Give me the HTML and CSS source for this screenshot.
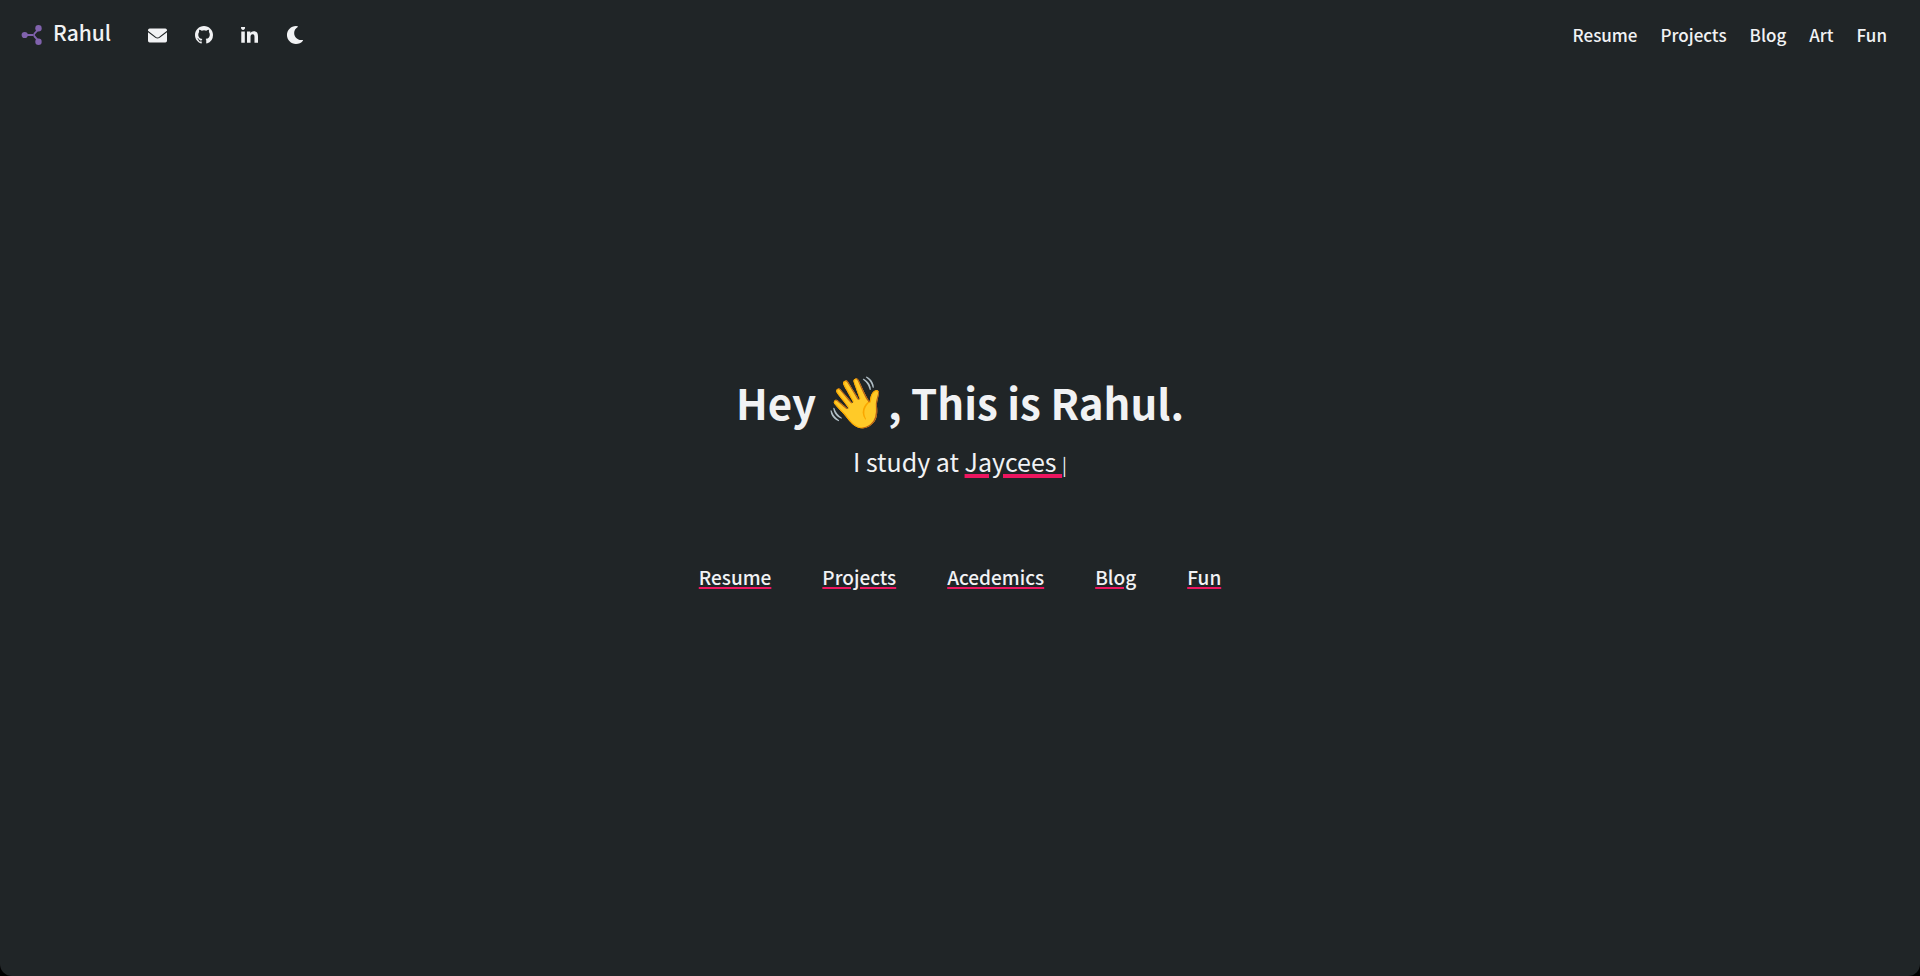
FILE: index.html
```html
<!DOCTYPE html>
<html lang="en">
<head>
<meta charset="utf-8">
<title>Rahul</title>
<link rel="stylesheet" href="styles.css">
</head>
<body>
<div class="page">
  <header class="topbar">
    <a class="brand" href="#">
      <svg class="brand-mark" viewBox="0 0 22 22" aria-hidden="true">
        <path d="M4 11H12M17.500 4.500C16.500 7 15 8 13.500 9.500Q12.200 11 13.500 12.500C15 14 16.500 15 17.500 18" fill="none" stroke="currentColor" stroke-width="1.800"/>
        <circle cx="3.700" cy="11" r="3.100"/><circle cx="17.500" cy="4.300" r="3.200"/><circle cx="17.500" cy="17.800" r="3.200"/>
      </svg>
      <span>Rahul</span>
    </a>
    <nav class="social" aria-label="Contact">
      <a href="#" aria-label="Email"><svg class="icon icon-mail" viewBox="0 0 19 19" aria-hidden="true"><path d="M1.700 2.500h15.600A1.700 1.700 0 0 1 19 4.200v.6L11 10.900q-1.500 1-3 0L0 4.800v-.6a1.700 1.700 0 0 1 1.700-1.700zM0 6.200l7.300 5.600q2.200 1.500 4.400 0L19 6.200v8.600a1.700 1.700 0 0 1-1.700 1.700H1.700A1.700 1.700 0 0 1 0 14.800z"/></svg></a>
      <a href="#" aria-label="GitHub"><svg class="icon" viewBox="0 0 16 16" aria-hidden="true"><path d="M8 0C3.580 0 0 3.580 0 8c0 3.540 2.290 6.530 5.470 7.590.4.070.55-.17.55-.38 0-.19-.01-.82-.01-1.490-2.010.37-2.530-.49-2.690-.94-.09-.23-.48-.94-.82-1.130-.28-.15-.68-.52-.01-.53.63-.01 1.080.58 1.230.82.72 1.210 1.870.87 2.330.66.070-.52.28-.87.51-1.070-1.780-.2-3.640-.89-3.640-3.950 0-.87.31-1.590.82-2.150-.08-.2-.36-1.020.08-2.120 0 0 .67-.21 2.200.82a7.600 7.600 0 0 1 4 0c1.530-1.040 2.200-.82 2.200-.82.44 1.100.16 1.920.08 2.120.51.56.82 1.270.82 2.150 0 3.070-1.870 3.750-3.650 3.950.29.25.54.73.54 1.480 0 1.070-.01 1.930-.01 2.200 0 .21.15.46.55.38A8.010 8.010 0 0 0 16 8c0-4.420-3.580-8-8-8z"/></svg></a>
      <a href="#" aria-label="LinkedIn"><svg class="icon icon-in" viewBox="0 0 448 448" aria-hidden="true"><path d="M100.300 416H7.400V116.900h92.900zM53.800 76.100C24.100 76.100 0 51.500 0 21.800a53.800 53.800 0 0 1 107.600 0c0 29.700-24.100 54.300-53.800 54.300zM447.900 416h-92.700V270.400c0-34.700-.7-79.200-48.300-79.200-48.300 0-55.700 37.700-55.700 76.700V416h-92.800V116.900h89.100v40.800h1.300c12.400-23.500 42.700-48.300 87.900-48.300 94 0 111.300 61.900 111.300 142.300V416z"/></svg></a>
      <button class="theme" type="button" aria-label="Dark mode"><svg class="icon" viewBox="0 0 512 512" aria-hidden="true"><path d="M283.200 512c79 0 151.100-35.900 198.900-94.800 7.100-8.700-.6-21.400-11.600-19.400-124.200 23.700-238.300-71.600-238.300-197 0-72.200 38.700-138.600 101.500-174.400 9.700-5.500 7.300-20.200-3.800-22.200A258 258 0 0 0 283.200 0c-141.300 0-256 114.500-256 256 0 141.300 114.500 256 256 256z"/></svg></button>
    </nav>
    <nav class="menu" aria-label="Main">
      <a href="#">Resume</a><a href="#">Projects</a><a href="#">Blog</a><a href="#">Art</a><a href="#">Fun</a>
    </nav>
  </header>
  <main class="hero">
    <h1 class="title">Hey <span class="wave">👋</span>, This is Rahul.</h1>
    <p class="subtitle">I study at <span class="typed">Jaycees&nbsp;</span><span class="caret">|</span></p>
    <nav class="links" aria-label="Sections">
      <a href="#">Resume</a><a href="#">Projects</a><a href="#">Acedemics</a><a href="#">Blog</a><a href="#">Fun</a>
    </nav>
  </main>
</div>
</body>
</html>
```
FILE: styles.css
```css
* { box-sizing: border-box; }
body {
  margin: 0;
  background: #000;
  color: #f1f2f4;
  font-family: "Source Sans Pro", "Noto Sans CJK JP", "Noto Sans", sans-serif;
  font-weight: 500;
}
a { color: inherit; text-decoration: none; }
.page {
  min-height: 100vh;
  display: flex;
  flex-direction: column;
  background: #202527;
  border-radius: 0 0 12px 12px;
}
.topbar {
  display: flex;
  align-items: center;
  height: 70px;
  padding: 0 33px 0 21px;
}
.brand {
  display: flex;
  align-items: center;
  gap: 10px;
  font-size: 21px;
  line-height: 32px;
  padding-bottom: 6px;
}
.brand-mark { width: 22px; height: 22px; color: #8062ad; fill: currentColor; margin-top: 6px; }
.social { display: flex; align-items: center; gap: 28px; margin-left: 37px; }
.social a, .theme { display: flex; }
.theme { padding: 0; border: 0; background: none; color: inherit; cursor: pointer; }
.icon { width: 18px; height: 18px; fill: currentColor; }
.icon-mail { width: 19px; height: 19px; }
.icon-in { width: 17px; height: 17px; }
.menu {
  display: flex;
  gap: 23px;
  margin-left: auto;
  font-size: 17px;
  line-height: 26px;
}
.hero {
  flex: 1;
  display: flex;
  flex-direction: column;
  align-items: center;
  justify-content: center;
  padding-bottom: 84px;
  text-align: center;
}
.title { margin: 0; font-size: 42px; line-height: 64px; font-weight: 700; }
.wave { font-family: "Noto Color Emoji", sans-serif; font-size: 50px; font-weight: 400; line-height: 1; }
.subtitle { margin: 7px 0 0; font-size: 25px; line-height: 40px; font-weight: 400; }
.typed {
  text-decoration: underline #ed1660 4px;
  text-underline-offset: 2px;
}
.caret { font-size: 18px; }
.links {
  display: flex;
  flex-wrap: wrap;
  justify-content: center;
  gap: 51px;
  margin-top: 77px;
  font-size: 19px;
  line-height: 32px;
}
.links a {
  text-decoration: underline #ed1660 2px;
  text-underline-offset: 2px;
}
```
